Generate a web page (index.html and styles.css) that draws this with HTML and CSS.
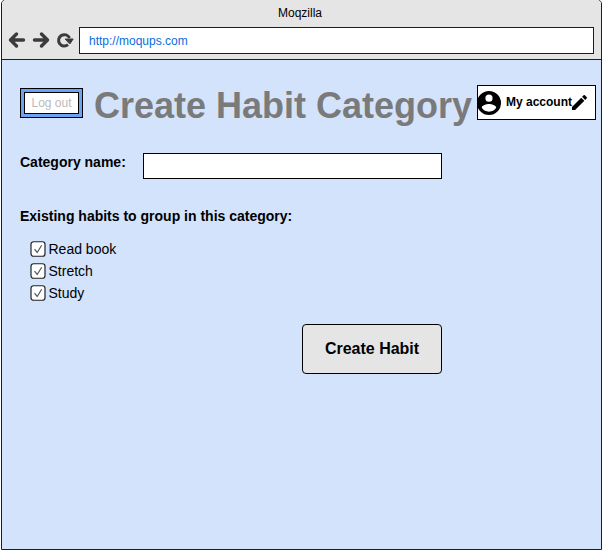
FILE: index.html
```html
<!DOCTYPE html>
<html lang="en">
<head>
<meta charset="utf-8">
<title>Create Habit Category</title>
<link rel="stylesheet" href="styles.css">
</head>
<body>
<div class="browser">
  <header class="chrome">
    <div class="window-title">Moqzilla</div>
    <div class="toolbar">
      <svg class="nav-icons" width="68" height="20" viewBox="0 0 68 20" fill="none" stroke="#3b3b3b" stroke-width="3.4" stroke-linecap="round" stroke-linejoin="round">
        <path d="M8.500 4l-6 6 6 6M3 10H15.500"/>
        <path d="M33.500 4l6 6-6 6M39 10H26.500"/>
        <path d="M60 14.700A5.700 5.700 0 1 1 61.500 8" stroke-width="3" stroke-linecap="butt"/>
        <path d="M57.500 9h7.700l-3.200 4.700z" fill="#3b3b3b" stroke-width="1"/>
      </svg>
      <div class="address">http://moqups.com</div>
    </div>
  </header>
  <main class="page">
    <div class="top">
      <div class="logout"><button class="logout-button">Log out</button></div>
      <h1>Create Habit Category</h1>
      <div class="account">
        <svg class="avatar" width="24" height="24" viewBox="0 0 24 24"><path fill-rule="evenodd" d="M12 0a12 12 0 1 0 0 24 12 12 0 0 0 0-24zm0 3.600a3.600 3.600 0 1 1 0 7.200 3.600 3.600 0 0 1 0-7.200zm0 17.040a8.640 8.640 0 0 1-7.200-3.864c.036-2.388 4.800-3.696 7.200-3.696s7.164 1.308 7.200 3.696A8.640 8.640 0 0 1 12 20.640z"/></svg>
        <span>My account</span>
        <svg width="15" height="15" viewBox="3 3 18 18"><path d="M3 17.250V21h3.750L17.810 9.940l-3.750-3.750L3 17.250zM20.710 7.040a1 1 0 0 0 0-1.410l-2.340-2.340a1 1 0 0 0-1.410 0l-1.830 1.830 3.750 3.750 1.830-1.830z"/></svg>
      </div>
    </div>
    <div class="field">
      <label for="category">Category name:</label>
      <input id="category" type="text">
    </div>
    <h2>Existing habits to group in this category:</h2>
    <ul class="habits">
      <li><svg class="check" width="16" height="16" viewBox="0 0 16 16"><rect x="1" y=".75" width="14" height="14.500" rx="2.500"/><path d="M4.500 8.200l2.700 3.300L11.700 4.300"/></svg>Read book</li>
      <li><svg class="check" width="16" height="16" viewBox="0 0 16 16"><rect x="1" y=".75" width="14" height="14.500" rx="2.500"/><path d="M4.500 8.200l2.700 3.300L11.700 4.300"/></svg>Stretch</li>
      <li><svg class="check" width="16" height="16" viewBox="0 0 16 16"><rect x="1" y=".75" width="14" height="14.500" rx="2.500"/><path d="M4.500 8.200l2.700 3.300L11.700 4.300"/></svg>Study</li>
    </ul>
    <button class="create">Create Habit</button>
  </main>
</div>
</body>
</html>
```
FILE: styles.css
```css
* { box-sizing: border-box; }
html { background: #fff; }
body {
  margin: 0;
  height: 552px;
  overflow: hidden;
  font-family: "Liberation Sans", Arial, sans-serif;
  color: #000;
}
.browser {
  width: 601px;
  height: 551px;
  margin: -1px 0 0 1px;
  border: 1px solid #1b1e22;
  border-radius: 5px 5px 0 0;
  background: #d3e3fc;
  overflow: hidden;
}
.chrome {
  height: 60px;
  background: #e5e5e5;
  border-bottom: 1px solid #1b1e22;
}
.window-title {
  height: 27px;
  padding-right: 3px;
  font-size: 12px;
  line-height: 26px;
  text-align: center;
}
.toolbar {
  display: flex;
  padding: 0 7px 0 6px;
}
.nav-icons { margin: 3px 3px 0 0; }
.address {
  flex: 1;
  height: 27px;
  padding-left: 9px;
  border: 1px solid #1b1e22;
  background: #fff;
  color: #0a6cdf;
  font-size: 12px;
  line-height: 26px;
}
.page { padding: 25px 5px 0 18px; }
.top {
  display: flex;
  align-items: flex-start;
  height: 68px;
}
.logout {
  width: 63px;
  height: 30px;
  margin-top: 3px;
  padding: 3px;
  border: 1px solid #000;
  background: #6ca2f2;
}
.logout-button {
  display: block;
  width: 55px;
  height: 22px;
  padding: 0;
  border: 1px solid #000;
  background: #fff;
  color: #bababa;
  font: 12px/20px "Liberation Sans", Arial, sans-serif;
}
h1 {
  width: 383px;
  margin: 0 0 0 11px;
  color: #7a7a7a;
  font-size: 36px;
  line-height: 41px;
  white-space: nowrap;
}
.account {
  display: flex;
  align-items: center;
  width: 119px;
  height: 35px;
  border: 1px solid #000;
  background: #fff;
  font-size: 12px;
  font-weight: bold;
  white-space: nowrap;
}
.account svg { flex: none; }
.account .avatar { margin-left: -1px; }
.account span {
  margin-left: 5px;
  padding-bottom: 2px;
}
.field {
  display: flex;
  height: 55px;
}
label {
  width: 123px;
  font-size: 14px;
  font-weight: bold;
  line-height: 18px;
}
input {
  width: 299px;
  height: 26px;
  padding: 0 6px;
  border: 1px solid #000;
  border-radius: 0;
}
h2 {
  margin: 0;
  font-size: 14px;
  line-height: 16px;
}
.habits {
  margin: 14px 0 0 10px;
  padding: 0;
  list-style: none;
  font-size: 14px;
}
.habits li {
  display: flex;
  align-items: center;
  gap: 2.500px;
  height: 22px;
}
.check {
  fill: #fff;
  stroke: #222;
  stroke-width: 1.2;
}
.check path {
  fill: none;
  stroke: #555;
}
.create {
  display: block;
  width: 140px;
  height: 50px;
  margin: 20px 0 0 282px;
  padding: 0;
  border: 1px solid #000;
  border-radius: 4px;
  background: #e5e5e5;
  color: #000;
  font: bold 16px/48px "Liberation Sans", Arial, sans-serif;
}
```
